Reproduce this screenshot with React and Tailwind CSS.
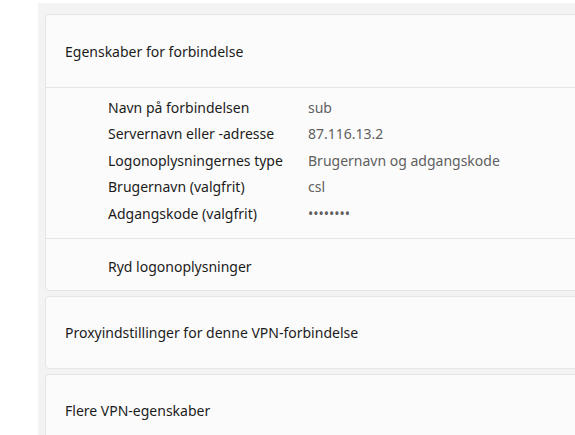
import React from 'react';

const rows = [
  { label: 'Navn på forbindelsen', value: 'sub' },
  { label: 'Servernavn eller -adresse', value: '87.116.13.2' },
  { label: 'Logonoplysningernes type', value: 'Brugernavn og adgangskode' },
  { label: 'Brugernavn (valgfrit)', value: 'csl' },
  { label: 'Adgangskode (valgfrit)', value: '••••••••' },
];

const App = () => {
  return (
    <div
      className="w-[575px] h-[435px] overflow-hidden bg-white text-[14px]"
      style={{ fontFamily: '"Noto Sans", "Open Sans", sans-serif' }}
    >
      <div className="ml-[38px] mt-[3px] w-[600px] h-[432px] bg-[#f3f3f3] pl-[7px] pt-[11px] flex flex-col gap-[5px]">
        {/* Connection properties */}
        <div className="shrink-0 rounded-[4px] border border-[#e5e5e5] bg-[#fbfbfb]">
          <div className="h-[72px] flex items-center pl-[19px] text-[#1b1b1b]">
            Egenskaber for forbindelse
          </div>
          <div className="border-t border-[#e5e5e5] pt-[6px] pb-[11px]">
            {rows.map((r) => (
              <div key={r.label} className="h-[26.5px] flex items-center">
                <span className="w-[262px] pl-[62px] text-[#1b1b1b]">{r.label}</span>
                <span className="text-[#5f5f5f]">{r.value}</span>
              </div>
            ))}
          </div>
          <div className="border-t border-[#e5e5e5] h-[52px] flex items-center pl-[62px] pt-[4px] text-[#1b1b1b]">
            Ryd logonoplysninger
          </div>
        </div>

        <div className="shrink-0 rounded-[4px] border border-[#e5e5e5] bg-[#fbfbfb] h-[73px] flex items-center pl-[19px] text-[#1b1b1b]">
          Proxyindstillinger for denne VPN-forbindelse
        </div>

        <div className="shrink-0 rounded-[4px] border border-[#e5e5e5] bg-[#fbfbfb] h-[73px] flex items-center pl-[19px] text-[#1b1b1b]">
          Flere VPN-egenskaber
        </div>
      </div>
    </div>
  );
};

export default App;
